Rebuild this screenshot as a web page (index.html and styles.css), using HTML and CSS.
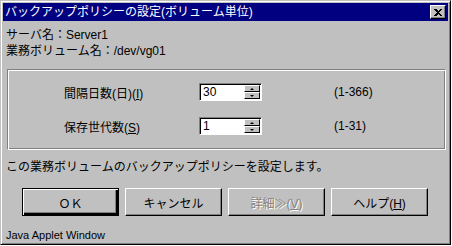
FILE: index.html
```html
<!DOCTYPE html>
<html lang="ja">
<head>
  <meta charset="UTF-8" />
  <title>バックアップポリシーの設定</title>
  <link rel="stylesheet" href="styles.css">
</head>
<body>

  <div class="window">
    <div class="titlebar">
      <span class="title">バックアップポリシーの設定(ボリューム単位)</span>
      <span class="close-btn">
        <svg width="8" height="7" viewBox="0 0 8 7" shape-rendering="crispEdges"><path d="M0 0h2l2 2 2-2h2l-3 3.5 3 3.5h-2l-2-2-2 2h-2l3-3.5z" fill="#000"/></svg>
      </span>
    </div>

    <div class="info">
      <div>サーバ名：Server1</div>
      <div>業務ボリューム名：/dev/vg01</div>
    </div>

    <div class="group">
      <span class="field-label">間隔日数(日)(<u>I</u>)</span>
      <div class="spin">
        <span class="spin-value">30</span>
        <span class="spin-buttons">
          <span class="spin-btn"><span class="arrow-up"></span></span>
          <span class="spin-btn"><span class="arrow-down"></span></span>
        </span>
      </div>
      <span class="range">(1-366)</span>

      <span class="field-label">保存世代数(<u>S</u>)</span>
      <div class="spin">
        <span class="spin-value">1</span>
        <span class="spin-buttons">
          <span class="spin-btn"><span class="arrow-up"></span></span>
          <span class="spin-btn"><span class="arrow-down"></span></span>
        </span>
      </div>
      <span class="range">(1-31)</span>
    </div>

    <p class="message">この業務ボリュームのバックアップポリシーを設定します。</p>

    <div class="buttons">
      <button class="btn btn-default">ＯＫ</button>
      <button class="btn">キャンセル</button>
      <button class="btn" disabled>詳細<span class="cjk">≫</span>(<u>V</u>)</button>
      <button class="btn">ヘルプ(<u>H</u>)</button>
    </div>

    <div class="footer">Java Applet Window</div>
  </div>

</body>
</html>
```

FILE: styles.css
```css
    body {
      margin: 0;
      background: #fff;
      font-family: "Liberation Sans", "Noto Sans CJK JP", sans-serif;
      font-size: 12px;
      color: #000;
    }
    .window {
      box-sizing: border-box;
      width: 451px;
      height: 245px;
      display: flex;
      flex-direction: column;
      background: #c0c0c0;
      border: 1px solid;
      border-color: #c0c0c0 #000 #000 #c0c0c0;
      box-shadow: inset 1px 1px #fff, inset -1px -1px #808080;
      padding: 2px;
    }
    .titlebar {
      height: 18px;
      display: flex;
      align-items: center;
      justify-content: space-between;
      background: #000080;
      color: #fff;
      padding-left: 2px;
    }
    .title {
      font-size: 12px;
      line-height: 18px;
    }
    .close-btn {
      box-sizing: border-box;
      width: 16px;
      height: 14px;
      margin-right: 2px;
      display: flex;
      align-items: center;
      justify-content: center;
      background: #c0c0c0;
      border: 1px solid;
      border-color: #fff #000 #000 #fff;
      box-shadow: inset -1px -1px #808080;
    }
    .info {
      margin-top: 6px;
      padding-left: 3px;
      line-height: 16px;
    }
    .group {
      box-sizing: border-box;
      width: 439px;
      height: 81px;
      margin: 10px 0 0 4px;
      border: 1px solid;
      border-color: #808080 #fff #fff #808080;
      box-shadow: inset 1px 1px #fff, inset -1px -1px #808080;
      padding: 13px 0 0 56px;
      display: grid;
      grid-template-columns: 135px 135px auto;
      grid-auto-rows: 18px;
      row-gap: 16px;
      align-items: center;
    }
    .spin {
      box-sizing: border-box;
      width: 63px;
      height: 18px;
      display: flex;
      background: #fff;
      border: 1px solid;
      border-color: #808080 #fff #fff #808080;
      box-shadow: inset 1px 1px #000;
      padding: 1px;
    }
    .spin-value {
      flex: 1;
      padding-left: 2px;
      line-height: 15px;
    }
    .spin-buttons {
      display: flex;
      flex-direction: column;
      width: 16px;
    }
    .spin-btn {
      box-sizing: border-box;
      flex: 1;
      display: flex;
      align-items: center;
      justify-content: center;
      background: #c0c0c0;
      border: 1px solid;
      border-color: #fff #000 #000 #fff;
    }
    .arrow-up, .arrow-down {
      width: 0;
      height: 0;
      border-left: 2px solid transparent;
      border-right: 2px solid transparent;
    }
    .arrow-up {
      border-bottom: 2px solid #000;
    }
    .arrow-down {
      border-top: 2px solid #000;
    }
    .message {
      margin: 9px 0 0;
      padding-left: 3px;
      line-height: 16px;
    }
    .buttons {
      display: flex;
      gap: 6px;
      margin-top: 13px;
      padding-left: 19px;
    }
    .btn {
      box-sizing: border-box;
      width: 97px;
      height: 28px;
      padding: 0;
      font-family: "Liberation Sans", "Noto Sans CJK JP", sans-serif;
      font-size: 12px;
      color: #000;
      background: #c0c0c0;
      border: 1px solid;
      border-color: #fff #000 #000 #fff;
      box-shadow: inset -1px -1px #808080;
    }
    .btn-default {
      border: 1px solid #000;
      box-shadow: inset 1px 1px #fff, inset -2px -2px #000, inset -3px -3px #808080;
    }
    .btn:disabled {
      color: #808080;
      text-shadow: 1px 1px #fff;
    }
    .cjk {
      font-family: "Noto Sans CJK JP", sans-serif;
    }
    .footer {
      margin-top: auto;
      padding-left: 3px;
      font-size: 11px;
      line-height: 14px;
    }
```
